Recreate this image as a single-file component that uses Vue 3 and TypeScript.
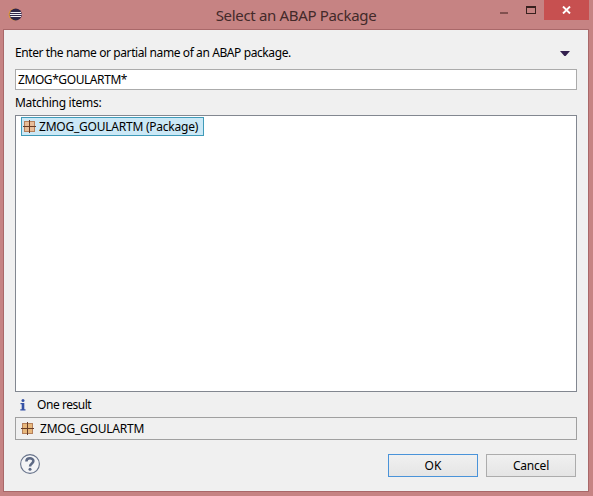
<script setup lang="ts">
import { computed, ref } from 'vue'

interface PackageItem {
  name: string
  kind: string
}

const query = ref<string>('ZMOG*GOULARTM*')
const items: PackageItem[] = [{ name: 'ZMOG_GOULARTM', kind: 'Package' }]
const selectedIndex = ref<number>(0)
const selected = computed<PackageItem>(() => items[selectedIndex.value])
</script>

<template>
  <div class="window">
    <header class="titlebar">
      <svg class="app-icon" width="14" height="14" viewBox="0 0 14 14">
        <circle cx="6.6" cy="7.5" r="6.1" fill="#e59a35" />
        <circle cx="7.7" cy="7.5" r="6.1" fill="#2f2448" />
        <path d="M2.4 5.5H13M1.8 7.5H13.6M2.4 9.5H13" stroke="#f2edf4" stroke-width="1" />
      </svg>
      <h1 class="title">Select an ABAP Package</h1>
      <div class="controls">
        <span class="minimize"></span>
        <span class="maximize"></span>
        <span class="close">
          <svg width="9" height="8" viewBox="0 0 9 8">
            <path d="M1 0.5L8 7.5M8 0.5L1 7.5" stroke="#fff" stroke-width="1.9" />
          </svg>
        </span>
      </div>
    </header>

    <main class="client">
      <div class="prompt">
        <span class="t-prompt">Enter the name or partial name of an ABAP package.</span>
        <svg class="arrow" width="10" height="5" viewBox="0 0 10 5">
          <path d="M0 0H10L5.6 5H4.4Z" fill="#33204e" />
        </svg>
      </div>
      <div class="field"><span class="t-query">{{ query }}</span></div>
      <div class="label"><span class="t-label">Matching items:</span></div>
      <div class="list">
        <div
          v-for="(item, index) in items"
          :key="item.name"
          class="item"
          :class="{ active: index === selectedIndex }"
        >
          <svg class="pkg" width="13" height="13" viewBox="0 0 13 13">
            <rect x="1.5" y="1.5" width="10" height="10" fill="#e8bd98" stroke="#b5805c" />
            <path d="M6.5 0V13M0 6.5H13" stroke="#673c26" />
          </svg>
          <span class="t-item">{{ item.name }} ({{ item.kind }})</span>
        </div>
      </div>
      <div class="status">
        <svg class="info" width="6" height="12" viewBox="0 0 6 12">
          <circle cx="3" cy="1.5" r="1.5" fill="#3551a5" />
          <path d="M0.5 4H4.3V10.3H5.5V11.5H0.3V10.3H1.7V5.2H0.5Z" fill="#3551a5" />
        </svg>
        <span class="t-status">One result</span>
      </div>
      <div class="details">
        <svg class="pkg" width="13" height="13" viewBox="0 0 13 13">
          <rect x="1.5" y="1.5" width="10" height="10" fill="#e8b87c" stroke="#b5805c" />
          <path d="M6.5 0V13M0 6.5H13" stroke="#673c26" />
        </svg>
        <span class="t-detail">{{ selected.name }}</span>
      </div>
      <footer class="footer">
        <svg class="help" width="20" height="20" viewBox="0 0 20 20">
          <circle cx="10" cy="10" r="9.4" fill="#f3f4f6" stroke="#66728a" stroke-width="1.1" />
          <path
            d="M6.4 7.4C6.4 3.4 13.4 3.4 13.4 7.1C13.4 9.5 10 9.5 10 12.6"
            fill="none"
            stroke="#5d6984"
            stroke-width="2.5"
          />
          <circle cx="10" cy="15.2" r="1.5" fill="#5d6984" />
        </svg>
        <div class="buttons">
          <button class="btn primary"><span class="t-ok">OK</span></button>
          <button class="btn"><span class="t-cancel">Cancel</span></button>
        </div>
      </footer>
    </main>
  </div>
</template>

<style>
body {
  margin: 0;
}
</style>

<style scoped>
.window {
  box-sizing: border-box;
  width: 593px;
  height: 496px;
  padding: 0 4px 4px 3px;
  display: flex;
  flex-direction: column;
  background: #c68383;
  font-family: 'Noto Sans', 'Open Sans', sans-serif;
  font-size: 12px;
  color: #000;
  white-space: nowrap;
}
.titlebar {
  height: 29px;
  flex: none;
  display: grid;
  grid-template-columns: 100px 1fr 100px;
  align-items: start;
}
.app-icon {
  display: block;
  margin: 7px 0 0 5px;
}
.title {
  margin: 4px 0 0;
  font-size: 15px;
  line-height: 22px;
  font-weight: 400;
  text-align: center;
  color: #432a2a;
  letter-spacing: -0.33px;
}
.controls {
  display: flex;
  justify-content: flex-end;
}
.minimize {
  width: 8px;
  height: 2px;
  margin: 12px 18px 0 0;
  background: #81504f;
}
.maximize {
  box-sizing: border-box;
  width: 10px;
  height: 8px;
  margin: 6px 8px 0 0;
  border: 1px solid #38211f;
  border-top-width: 2px;
}
.close {
  width: 45px;
  height: 20px;
  display: flex;
  align-items: center;
  justify-content: center;
  background: #c75050;
}
.client {
  box-sizing: border-box;
  flex: 1;
  display: flex;
  flex-direction: column;
  padding: 12px 11px 0;
  border: 1px solid #a96869;
  background: #f0f0f0;
}
.prompt {
  height: 27px;
  display: flex;
  align-items: flex-start;
  justify-content: space-between;
  line-height: 22px;
}
.arrow {
  margin: 9px 7px 0 0;
}
.field {
  box-sizing: border-box;
  height: 21px;
  padding-left: 2px;
  border: 1px solid #ababab;
  background: #fff;
  line-height: 19px;
}
.label {
  height: 25px;
  line-height: 26px;
}
.list {
  box-sizing: border-box;
  height: 277px;
  padding: 1px 5px;
  border: 1px solid #828790;
  background: #fff;
}
.item {
  box-sizing: border-box;
  width: 183px;
  height: 19px;
  display: flex;
  align-items: center;
  gap: 3px;
  padding-left: 1px;
  border: 1px solid transparent;
}
.item.active {
  background: #cbe8f6;
  border-color: #3f9bb9;
}
.pkg {
  flex: none;
}
.status {
  height: 25px;
  display: flex;
  align-items: center;
  gap: 11px;
  padding: 0 0 0 5px;
}
.info {
  margin-top: 1px;
}
.details {
  box-sizing: border-box;
  height: 23px;
  display: flex;
  align-items: center;
  gap: 6px;
  padding-left: 5px;
  border: 1px solid #a0a0a0;
}
.footer {
  display: flex;
  justify-content: space-between;
  padding: 14px 1px 0 5px;
}
.buttons {
  display: flex;
  gap: 8px;
}
.btn {
  box-sizing: border-box;
  width: 90px;
  height: 23px;
  padding: 0;
  border: 1px solid #acacac;
  border-radius: 0;
  background: linear-gradient(#f0f0f0, #e5e5e5);
  font: inherit;
  color: inherit;
  line-height: 20px;
}
.btn.primary {
  border-color: #4a93d9;
}
.t-prompt {
  letter-spacing: -0.4px;
}
.t-query {
  letter-spacing: -0.42px;
}
.t-label {
  letter-spacing: -0.28px;
}
.t-item,
.t-detail {
  letter-spacing: -0.23px;
}
.t-status {
  letter-spacing: -0.45px;
}
.t-cancel {
  letter-spacing: -0.2px;
}
</style>
